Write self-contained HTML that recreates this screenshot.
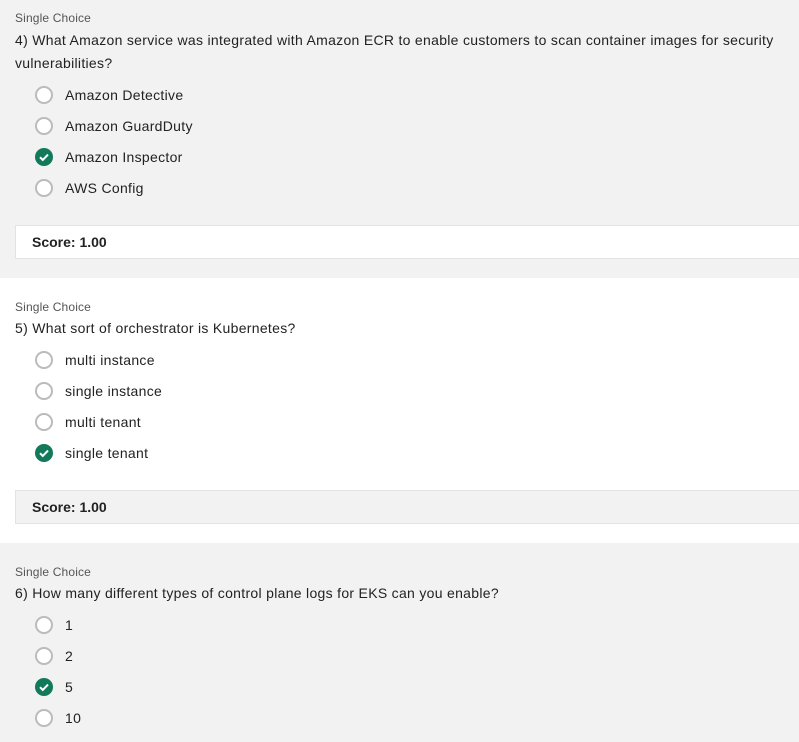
<!DOCTYPE html>
<html><head><style>
*{margin:0;padding:0;box-sizing:border-box}
body{width:799px;height:742px;overflow:hidden;font-family:"Liberation Sans",Arial,sans-serif;color:#222;background:#fff}
.sec{position:absolute;left:0;width:799px}
.g{background:#f1f2f1}
.lbl{position:absolute;left:15px;font-size:12px;color:#555;letter-spacing:0.15px}
.q{position:absolute;left:15px;font-size:14px;line-height:23px;color:#222;width:775px;letter-spacing:0.3px}
.opt{position:absolute;left:35px;font-size:14px;height:18px;line-height:18px;letter-spacing:0.3px}
.opt i{position:absolute;left:0;top:0;width:18px;height:18px;border:2px solid #bbb;border-radius:50%;background:#fff}
.opt i.c{border:none;background:#13795b}
.opt i.c svg{position:absolute;left:0;top:0}
.opt span{position:absolute;left:30px;white-space:nowrap}
.score{position:absolute;left:15px;width:800px;height:34px;border:1px solid #e2e3e2;font-size:14px;font-weight:bold;padding-left:16px;line-height:32px}
</style></head><body>
<div class="sec g" style="top:0;height:278px"></div>
<div class="sec" style="top:278px;height:265px"></div>
<div class="sec g" style="top:543px;height:199px"></div>

<div class="lbl" style="top:11px">Single Choice</div>
<div class="q" style="top:29px">4) What Amazon service was integrated with Amazon ECR to enable customers to scan container images for security vulnerabilities?</div>
<div class="opt" style="top:86px"><i></i><span>Amazon Detective</span></div>
<div class="opt" style="top:117px"><i></i><span>Amazon GuardDuty</span></div>
<div class="opt" style="top:148px"><i class="c"><svg width="18" height="18"><path d="M5 9.2l2.8 2.8 5.2-5.4" stroke="#fff" stroke-width="2" fill="none"/></svg></i><span>Amazon Inspector</span></div>
<div class="opt" style="top:179px"><i></i><span>AWS Config</span></div>
<div class="score" style="top:225px;background:#fff">Score: 1.00</div>

<div class="lbl" style="top:300px">Single Choice</div>
<div class="q" style="top:317px">5) What sort of orchestrator is Kubernetes?</div>
<div class="opt" style="top:351px"><i></i><span>multi instance</span></div>
<div class="opt" style="top:382px"><i></i><span>single instance</span></div>
<div class="opt" style="top:413px"><i></i><span>multi tenant</span></div>
<div class="opt" style="top:444px"><i class="c"><svg width="18" height="18"><path d="M5 9.2l2.8 2.8 5.2-5.4" stroke="#fff" stroke-width="2" fill="none"/></svg></i><span>single tenant</span></div>
<div class="score" style="top:490px;background:#f1f2f1">Score: 1.00</div>

<div class="lbl" style="top:565px">Single Choice</div>
<div class="q" style="top:582px">6) How many different types of control plane logs for EKS can you enable?</div>
<div class="opt" style="top:616px"><i></i><span>1</span></div>
<div class="opt" style="top:647px"><i></i><span>2</span></div>
<div class="opt" style="top:678px"><i class="c"><svg width="18" height="18"><path d="M5 9.2l2.8 2.8 5.2-5.4" stroke="#fff" stroke-width="2" fill="none"/></svg></i><span>5</span></div>
<div class="opt" style="top:709px"><i></i><span>10</span></div>
</body></html>
